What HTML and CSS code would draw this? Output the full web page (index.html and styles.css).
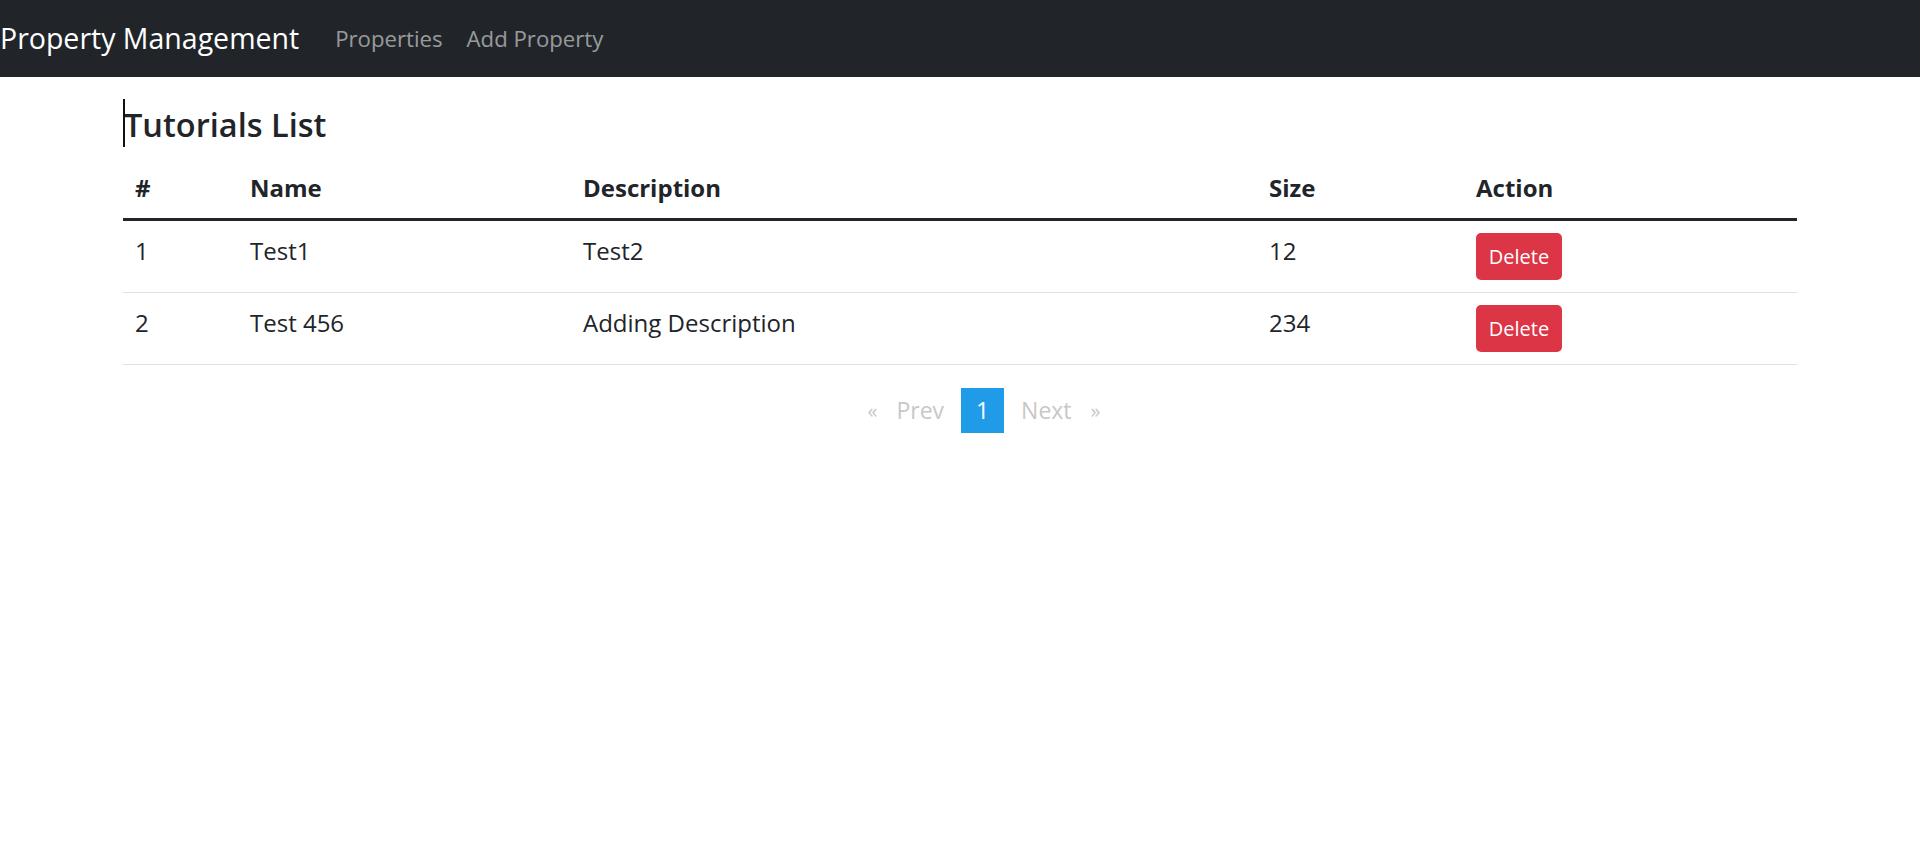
FILE: index.html
```html
<!DOCTYPE html>
<html lang="en">
<head>
<meta charset="utf-8">
<title>Property Management</title>
<link rel="stylesheet" href="styles.css">
</head>
<body>
<nav class="navbar">
  <a class="brand" href="#">Property Management</a>
  <a class="nav-link" href="#">Properties</a>
  <a class="nav-link" href="#">Add Property</a>
</nav>
<main class="container">
  <h4 class="title">Tutorials List</h4>
  <table class="table">
    <thead>
      <tr>
        <th class="c-num">#</th>
        <th class="c-name">Name</th>
        <th class="c-desc">Description</th>
        <th class="c-size">Size</th>
        <th class="c-act">Action</th>
      </tr>
    </thead>
    <tbody>
      <tr>
        <td>1</td>
        <td>Test1</td>
        <td>Test2</td>
        <td>12</td>
        <td><button class="btn-danger" type="button">Delete</button></td>
      </tr>
      <tr>
        <td>2</td>
        <td>Test 456</td>
        <td>Adding Description</td>
        <td>234</td>
        <td><button class="btn-danger" type="button">Delete</button></td>
      </tr>
    </tbody>
  </table>
  <ul class="pagination">
    <li class="pg-item pg-arrow">«</li>
    <li class="pg-item">Prev</li>
    <li class="pg-item active">1</li>
    <li class="pg-item">Next</li>
    <li class="pg-item pg-arrow">»</li>
  </ul>
</main>
</body>
</html>
```

FILE: styles.css
```css
* { box-sizing: border-box; }

body {
  margin: 0;
  font-family: "Open Sans", "Noto Sans", "Liberation Sans", sans-serif;
  font-size: 24px;
  line-height: 1.5;
  color: #212529;
  background: #fff;
}

.navbar {
  display: flex;
  align-items: center;
  height: 77px;
  background: #212529;
}

.brand {
  font-size: 28.5px;
  color: #fff;
  text-decoration: none;
  margin-right: 24px;
  white-space: nowrap;
}

.nav-link {
  padding: 0 12px;
  font-size: 22.2px;
  color: rgba(255, 255, 255, 0.55);
  text-decoration: none;
}

.container {
  width: 1674px;
  margin: 0 auto;
}

.title {
  position: relative;
  margin: 27px 0 12px;
  padding-left: 1px;
  font-size: 32.5px;
  font-weight: 600;
  line-height: 42px;
}

.title::before {
  content: "";
  position: absolute;
  left: 0;
  top: -5px;
  width: 2px;
  height: 48px;
  background: #111;
}

.table {
  width: 100%;
  border-collapse: collapse;
}

.table th,
.table td {
  padding: 12px;
  text-align: left;
  vertical-align: top;
  line-height: 36px;
}

.table th {
  font-weight: 700;
  border-bottom: 3px solid #212529;
}

.table td {
  border-bottom: 1px solid #dee2e6;
}

.c-num { width: 115px; }
.c-name { width: 333px; }
.c-desc { width: 686px; }
.c-size { width: 207px; }
.c-act { width: 333px; }

.btn-danger {
  display: block;
  width: 86px;
  height: 47px;
  padding: 0;
  border: 0;
  border-radius: 5px;
  background: #dc3545;
  color: #fff;
  font-family: inherit;
  font-size: 20px;
  line-height: 47px;
  text-align: center;
}

.pagination {
  display: flex;
  justify-content: center;
  align-items: center;
  list-style: none;
  margin: 23px 0 0;
  padding: 0 0 0 48px;
}

.pg-item {
  padding: 0 10px;
  height: 45px;
  line-height: 45px;
  color: #c8c8c8;
  font-size: 23px;
}

.pg-arrow {
  font-size: 20px;
  padding: 0 9px;
}

.pg-item.active {
  width: 43px;
  margin: 0 7px;
  padding: 0;
  text-align: center;
  background: #209be8;
  color: #fff;
}
```
